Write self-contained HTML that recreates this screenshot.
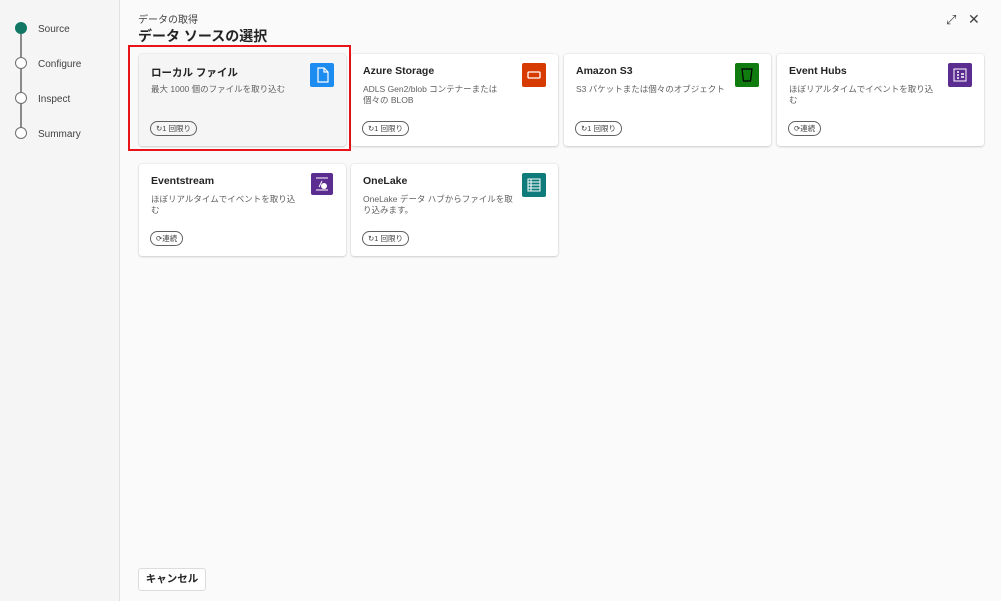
<!DOCTYPE html>
<html><head><meta charset="utf-8"><style>
*{margin:0;padding:0;box-sizing:border-box}
body{width:1001px;height:601px;overflow:hidden;background:#fafafa;font-family:"Liberation Sans","Noto Sans CJK JP",sans-serif;color:#242424;position:relative}
.side{position:absolute;left:0;top:0;width:120px;height:601px;background:#f5f5f5;border-right:1px solid #e0e0e0}
.line{position:absolute;left:20px;top:28px;width:2px;height:105px;background:#8a8a8a}
.dot{position:absolute;left:15px;width:12px;height:12px;border-radius:50%;border:1px solid #707070;background:#fff}
.dot.on{background:#117865;border-color:#117865}
.lbl{position:absolute;left:38px;font-size:10px;color:#424242}
.card{position:absolute;width:207px;height:92px;background:#fff;border-radius:3px;box-shadow:0 0 2px rgba(0,0,0,.12),0 1px 2px rgba(0,0,0,.14)}
.card.sel{background:#f5f5f5}
.t{position:absolute;left:12px;top:11px;font-size:10.5px;font-weight:bold}
.d{position:absolute;left:12px;top:30px;font-size:8.5px;color:#616161;width:150px;line-height:11px}
.ic{position:absolute;right:12px;top:9px;width:24px;height:24px;border-radius:2px}
.pill{position:absolute;left:11px;top:67px;height:15px;border:1px solid #616161;border-radius:8px;font-size:7.5px;padding:0 5px;line-height:13px;color:#424242}
</style></head><body>
<div class="side">
<div class="line"></div>
<div class="dot on" style="top:22px"></div><div class="lbl" style="top:24px">Source</div>
<div class="dot" style="top:57px"></div><div class="lbl" style="top:59px">Configure</div>
<div class="dot" style="top:92px"></div><div class="lbl" style="top:94px">Inspect</div>
<div class="dot" style="top:127px"></div><div class="lbl" style="top:129px">Summary</div>
</div>
<div style="position:absolute;left:138px;top:11px;font-size:10px;color:#424242">データの取得</div>
<div style="position:absolute;left:138px;top:26px;font-size:14px;font-weight:bold">データ ソースの選択</div>
<div style="position:absolute;left:946px;top:12px;font-size:13px;color:#424242">⤢</div>
<div style="position:absolute;left:968px;top:11px;font-size:14px;color:#424242">✕</div>
<div style="position:absolute;left:128px;top:45px;width:223px;height:106px;border:2px solid #e8141a"></div>

<div class="card sel" style="left:139px;top:54px"><div class="t">ローカル ファイル</div><div class="d">最大 1000 個のファイルを取り込む</div><div class="ic" style="background:#1d8cf0"><svg width="24" height="24"><path d="M8 5h6l4 4v10H8z M14 5v4h4" fill="none" stroke="#fff" stroke-width="1.2"/></svg></div><div class="pill">↻1 回限り</div></div>
<div class="card" style="left:351px;top:54px"><div class="t">Azure Storage</div><div class="d">ADLS Gen2/blob コンテナーまたは個々の BLOB</div><div class="ic" style="background:#d83b01"><svg width="24" height="24"><rect x="6" y="9" width="12" height="6" rx="1" fill="none" stroke="#fff" stroke-width="1.3"/></svg></div><div class="pill">↻1 回限り</div></div>
<div class="card" style="left:564px;top:54px"><div class="t">Amazon S3</div><div class="d" style="width:170px">S3 バケットまたは個々のオブジェクト</div><div class="ic" style="background:#107c10"><svg width="24" height="24"><path d="M7 6h10l-1.5 12h-7z" fill="none" stroke="#000" stroke-width="1.2"/></svg></div><div class="pill">↻1 回限り</div></div>
<div class="card" style="left:777px;top:54px"><div class="t">Event Hubs</div><div class="d">ほぼリアルタイムでイベントを取り込む</div><div class="ic" style="background:#5c2d91"><svg width="24" height="24"><path d="M6 6h12v12H6z" fill="none" stroke="#fff"/><path d="M9 9h2M9 12h2M9 15h2M13 11h3M13 14h3" stroke="#fff" stroke-width="1.5"/></svg></div><div class="pill">⟳連続</div></div>
<div class="card" style="left:139px;top:164px"><div class="t">Eventstream</div><div class="d">ほぼリアルタイムでイベントを取り込む</div><div class="ic" style="background:#5c2d91;width:22px;height:22px;right:13px"><svg width="22" height="22"><path d="M5 5h12M5 17h12" stroke="#fff"/><circle cx="13" cy="13" r="3" fill="#fff"/><path d="M8 14l3-6" stroke="#fff"/></svg></div><div class="pill">⟳連続</div></div>
<div class="card" style="left:351px;top:164px"><div class="t">OneLake</div><div class="d">OneLake データ ハブからファイルを取り込みます。</div><div class="ic" style="background:#0f7b7a"><svg width="24" height="24"><rect x="6" y="6" width="12" height="12" fill="none" stroke="#fff"/><path d="M6 9h12M6 12h12M6 15h12M9 6v12" stroke="#fff"/></svg></div><div class="pill">↻1 回限り</div></div>

<div style="position:absolute;left:138px;top:568px;width:68px;height:23px;background:#fff;border:1px solid #dcdcdc;border-radius:3px;font-size:10.5px;font-weight:bold;text-align:center;line-height:21px;color:#242424">キャンセル</div>
</body></html>
